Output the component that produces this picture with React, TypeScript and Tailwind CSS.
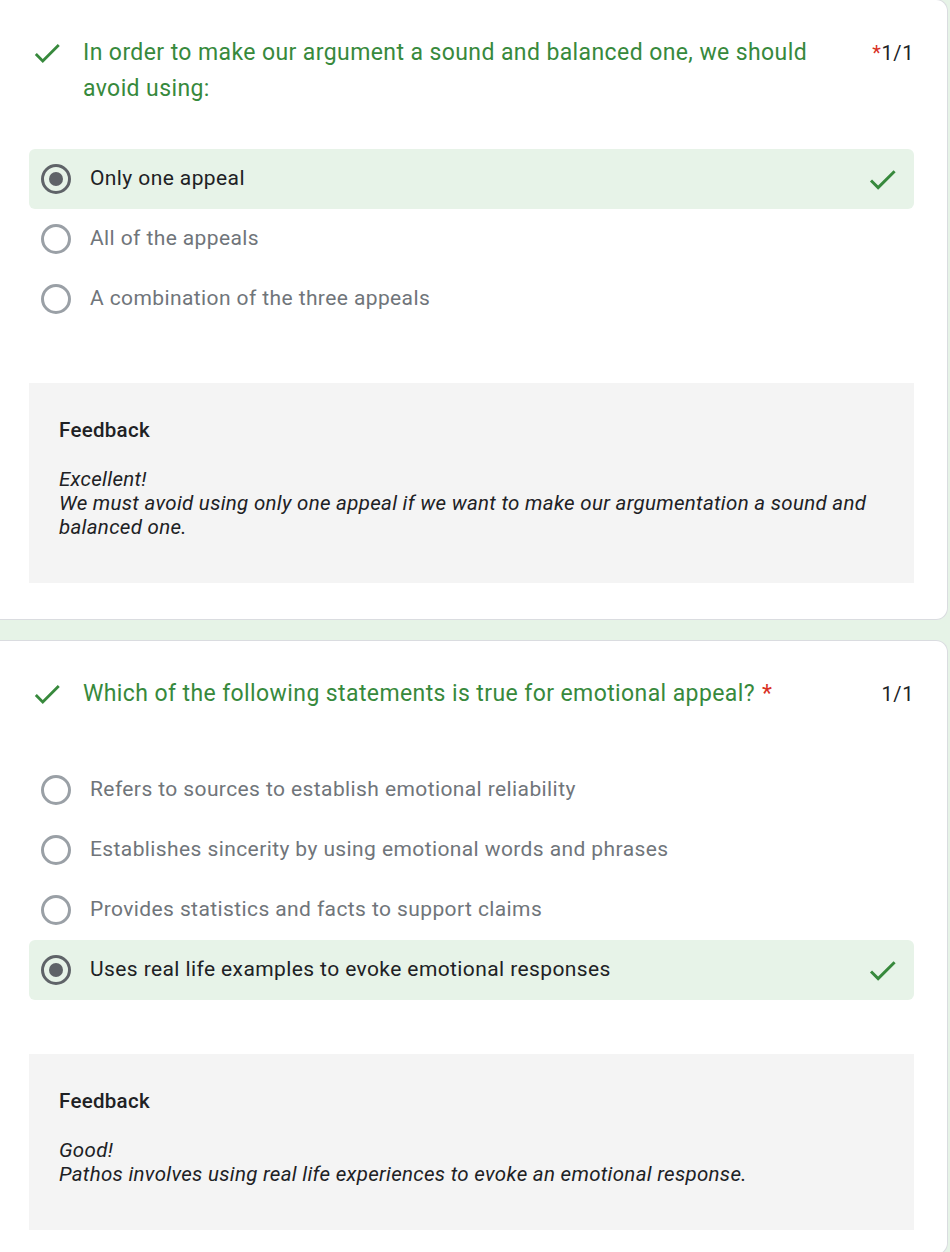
import React from "react";

type Option = { label: string; selected?: boolean };

type Question = {
  title: string;
  starWithScore: boolean;
  options: Option[];
  feedbackLead: string;
  feedbackText: string;
};

const questions: Question[] = [
  {
    title: "In order to make our argument a sound and balanced one, we should avoid using:",
    starWithScore: true,
    options: [
      { label: "Only one appeal", selected: true },
      { label: "All of the appeals" },
      { label: "A combination of the three appeals" },
    ],
    feedbackLead: "Excellent!",
    feedbackText:
      "We must avoid using only one appeal if we want to make our argumentation a sound and balanced one.",
  },
  {
    title: "Which of the following statements is true for emotional appeal?",
    starWithScore: false,
    options: [
      { label: "Refers to sources to establish emotional reliability" },
      { label: "Establishes sincerity by using emotional words and phrases" },
      { label: "Provides statistics and facts to support claims" },
      { label: "Uses real life examples to evoke emotional responses", selected: true },
    ],
    feedbackLead: "Good!",
    feedbackText: "Pathos involves using real life experiences to evoke an emotional response.",
  },
];

function Tick({ className }: { className?: string }) {
  return (
    <svg viewBox="0 0 24 24" className={className} fill="currentColor">
      <path d="M9 16.17L4.83 12l-1.42 1.41L9 19 21 7l-1.41-1.41z" />
    </svg>
  );
}

function Radio({ selected }: { selected?: boolean }) {
  return (
    <div
      className={
        "w-[30px] h-[30px] rounded-full border-[3px] flex items-center justify-center shrink-0 " +
        (selected ? "border-[#5f6368]" : "border-[#9aa0a6]")
      }
    >
      {selected && <div className="w-[14px] h-[14px] rounded-full bg-[#5f6368]" />}
    </div>
  );
}

function QuestionCard({ q, first }: { q: Question; first: boolean }) {
  return (
    <div
      className={
        "bg-white border border-[#dadce0] border-l-0 rounded-r-xl w-[948px] pl-[29px] pr-[33px] pt-[35px] " +
        (first ? "pb-[36px] -mt-[1px]" : "pb-[24px]")
      }
    >
      <div className="flex items-start">
        <Tick className="w-[34px] h-[34px] text-[#37893c] mt-[1px] ml-[1px] shrink-0" />
        <div className="ml-[19px] flex-1 text-[23px] leading-[36px] tracking-[0.4px] text-[#37893c] pr-[40px]">
          {q.title}
          {!q.starWithScore && <span className="text-[#d93025] ml-[7px]">*</span>}
        </div>
        <div className="text-[20px] leading-[36px] tracking-[0.6px] text-[#202124] shrink-0">
          {q.starWithScore && <span className="text-[#d93025]">*</span>}
          1/1
        </div>
      </div>

      <div className={first ? "mt-[42px]" : "mt-[48px]"}>
        {q.options.map((o) => (
          <div
            key={o.label}
            className={
              "h-[60px] flex items-center pl-[12px] pr-[14px] rounded-md " +
              (o.selected ? "bg-[#e7f3e8]" : "")
            }
          >
            <Radio selected={o.selected} />
            <span
              className={
                "ml-[19px] flex-1 text-[21px] tracking-[0.4px] " +
                (o.selected ? "text-[#202124]" : "text-[#70757a]")
              }
            >
              {o.label}
            </span>
            {o.selected && <Tick className="w-[35px] h-[35px] text-[#37893c]" />}
          </div>
        ))}
      </div>

      <div className="mt-[54px] bg-[#f4f4f4] pl-[30px] pr-[40px] pt-[35px] pb-[44px]">
        <div className="text-[20.5px] leading-[24px] tracking-[0.3px] font-medium text-[#202124]">
          Feedback
        </div>
        <div className="mt-[25px] text-[20.5px] leading-[24px] tracking-[0.3px] italic text-[#202124]">
          <div>{q.feedbackLead}</div>
          <div>{q.feedbackText}</div>
        </div>
      </div>
    </div>
  );
}

export default function App() {
  return (
    <div
      className="w-[950px] h-[1252px] overflow-hidden bg-[#e6f3e7]"
      style={{ fontFamily: "Roboto, 'Noto Sans', sans-serif" }}
    >
      <div className="flex flex-col gap-[20px]">
        {questions.map((q, i) => (
          <QuestionCard key={i} q={q} first={i === 0} />
        ))}
      </div>
    </div>
  );
}
